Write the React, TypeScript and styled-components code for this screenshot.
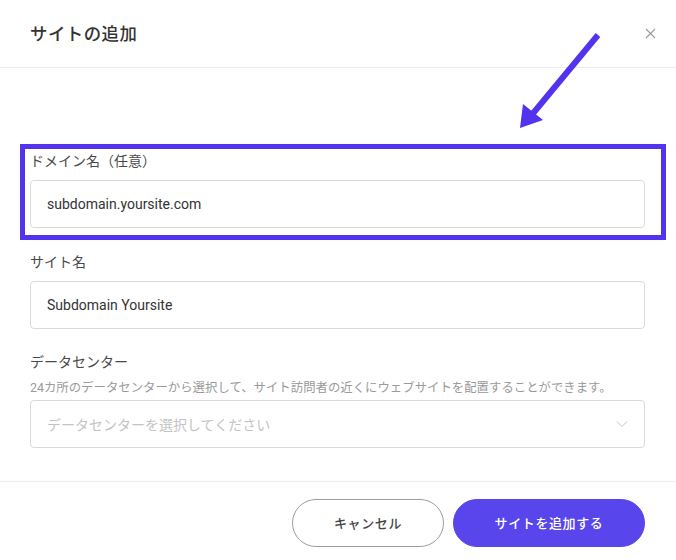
import React from "react";
import styled, { createGlobalStyle } from "styled-components";

const Global = createGlobalStyle`
  html, body { margin: 0; padding: 0; background: #fff; }
  body { font-family: Roboto, "Noto Sans CJK JP", sans-serif; -webkit-font-smoothing: antialiased; }
  * { box-sizing: border-box; }
`;

const Modal = styled.div`
  position: relative;
  width: 676px;
  height: 560px;
  background: #fff;
  display: flex;
  flex-direction: column;
  overflow: hidden;
`;

const Header = styled.div`
  height: 68px;
  display: flex;
  align-items: center;
  justify-content: space-between;
  padding: 0 16px 0 30px;
  border-bottom: 1px solid #ececec;
`;

const Title = styled.h1`
  margin: 0;
  font-size: 17.4px;
  font-weight: 500;
  color: #333;
  letter-spacing: 0.5px;
  margin-top: -3px;
`;

const Close = styled.button`
  border: 0;
  background: none;
  padding: 0;
  width: 20px;
  height: 20px;
  display: flex;
  align-items: center;
  justify-content: center;
  margin-top: -1px;
  cursor: pointer;
`;

const Body = styled.div`
  flex: 1;
  display: flex;
  flex-direction: column;
  padding: 76px 31px 0 30px;
`;

const Field = styled.div<{ $mt?: number }>`
  display: flex;
  flex-direction: column;
  margin-top: ${(p) => p.$mt ?? 0}px;
`;

const Highlight = styled.div`
  margin: 0 -21px 0 -10px;
  border: 5px solid #5333ed;
  padding: 2px 16px 7px 5px;
`;

const Label = styled.label`
  font-size: 14px;
  line-height: 20px;
  color: #4a4a4a;
  margin-bottom: 9px;
`;

const Hint = styled.div`
  font-size: 12.4px;
  line-height: 18px;
  color: #9a9a9a;
  margin: -2px 0 3px;
`;

const Input = styled.div<{ $placeholder?: boolean }>`
  height: 48px;
  border: 1px solid #dadada;
  border-radius: 4px;
  display: flex;
  align-items: center;
  justify-content: space-between;
  padding: 0 16px;
  font-size: 14px;
  color: ${(p) => (p.$placeholder ? "#c4c4c4" : "#333")};
`;

const Footer = styled.div`
  height: 82px;
  border-top: 1px solid #ececec;
  display: flex;
  justify-content: flex-end;
  align-items: center;
  gap: 9px;
  padding: 0 31px 0 0;
  margin-bottom: -3px;
`;

const Button = styled.button<{ $primary?: boolean }>`
  height: 48px;
  border-radius: 24px;
  font-family: inherit;
  font-size: 13px;
  font-weight: 500;
  padding: 0;
  width: ${(p) => (p.$primary ? 192 : 152)}px;
  border: 1px solid ${(p) => (p.$primary ? "#5846ec" : "#9c9c9c")};
  background: ${(p) => (p.$primary ? "#5846ec" : "#fff")};
  color: ${(p) => (p.$primary ? "#fff" : "#444")};
  letter-spacing: 0.6px;
`;

const Arrow = styled.svg`
  position: absolute;
  left: 0;
  top: 0;
  pointer-events: none;
`;

export default function App() {
  return (
    <>
      <Global />
      <Modal>
        <Header>
          <Title>サイトの追加</Title>
          <Close aria-label="close">
            <svg width="11" height="11" viewBox="0 0 11 11">
              <path d="M1 1L10 10M10 1L1 10" stroke="#9a9a9a" strokeWidth="1.1" />
            </svg>
          </Close>
        </Header>
        <Body>
          <Highlight>
            <Field>
              <Label>ドメイン名（任意）</Label>
              <Input>subdomain.yoursite.com</Input>
            </Field>
          </Highlight>
          <Field $mt={12}>
            <Label>サイト名</Label>
            <Input>Subdomain Yoursite</Input>
          </Field>
          <Field $mt={23}>
            <Label>データセンター</Label>
            <Hint>24カ所のデータセンターから選択して、サイト訪問者の近くにウェブサイトを配置することができます。</Hint>
            <Input $placeholder>
              データセンターを選択してください
              <svg width="12" height="8" viewBox="0 0 12 8">
                <path d="M1 1.5L6 6.5L11 1.5" stroke="#c4c4c4" strokeWidth="1" fill="none" />
              </svg>
            </Input>
          </Field>
        </Body>
        <Footer>
          <Button>キャンセル</Button>
          <Button $primary>サイトを追加する</Button>
        </Footer>
        <Arrow width="676" height="560" viewBox="0 0 676 560">
          <line x1="598" y1="35" x2="530" y2="117" stroke="#5333ed" strokeWidth="6" />
          <polygon points="520,128 523,104 543,120" fill="#5333ed" />
        </Arrow>
      </Modal>
    </>
  );
}
